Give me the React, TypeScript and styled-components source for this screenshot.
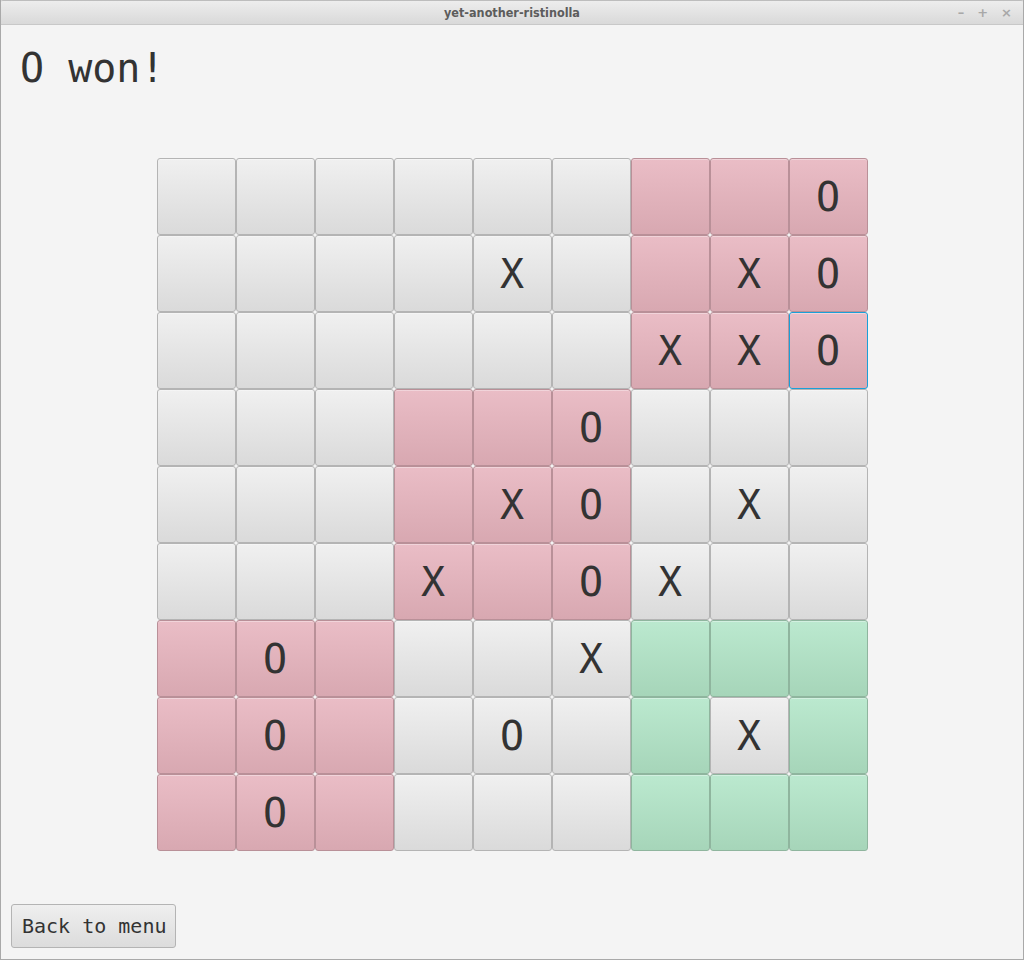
import { styled, createGlobalStyle } from 'styled-components';

const GlobalStyle = createGlobalStyle`
  html, body {
    margin: 0;
    padding: 0;
    background: #f4f4f4;
  }
`;

const Window = styled.div`
  display: flex;
  flex-flow: column nowrap;
  width: 1024px;
  height: 960px;
  box-sizing: border-box;
  border: 1px solid #a9a9a9;
  border-top: none;
  background: #f4f4f4;
  overflow: hidden;
`;

const TitleBar = styled.div`
  position: relative;
  flex: 0 0 25px;
  display: flex;
  align-items: center;
  justify-content: center;
  margin: 0 -1px;
  box-sizing: border-box;
  background: linear-gradient(#ededed, #d9d9d9);
  border-bottom: 1px solid #c8c8c8;
  border-top: 1px solid #bdbdbd;
  border-radius: 3px 3px 0 0;
  font-family: 'DejaVu Sans Condensed', 'DejaVu Sans', sans-serif;
  font-weight: bold;
  font-size: 12.5px;
  color: #5c5c5c;
`;

const WindowControls = styled.div`
  position: absolute;
  right: 12px;
  top: 0;
  height: 100%;
  display: flex;
  align-items: center;
  gap: 13px;
  font-family: 'DejaVu Sans', sans-serif;
  font-size: 13px;
  font-weight: bold;
  color: #a8a8a8;
`;

const Content = styled.div`
  flex: 1;
  display: flex;
  flex-flow: column nowrap;
  padding: 20px 10px 11px 19px;
  font-family: 'DejaVu Sans Mono', 'Liberation Mono', monospace;
  color: #333333;
`;

const Heading = styled.div`
  font-size: 40px;
  line-height: 47px;
`;

const BoardArea = styled.div`
  display: flex;
  justify-content: center;
  margin: 66px 0 0 -9px;
`;

const Board = styled.div`
  display: grid;
  grid-template-columns: repeat(9, 79px);
  grid-auto-rows: 77px;
`;

type Tone = 'plain' | 'lost' | 'won';

const tones: Record<Tone, { top: string; bottom: string; border: string }> = {
  plain: { top: '#f0f0f0', bottom: '#dadada', border: '#b4b4b4' },
  lost: { top: '#eabdc6', bottom: '#d8a8b1', border: '#b99098' },
  won: { top: '#bbe9cf', bottom: '#a6d5b9', border: '#8fb59e' },
};

const Cell = styled.div<{ $tone: Tone; $focused?: boolean }>`
  box-sizing: border-box;
  display: flex;
  align-items: center;
  justify-content: center;
  border: 1px solid
    ${({ $tone, $focused }) => ($focused ? '#1a9fd8' : tones[$tone].border)};
  border-radius: 3px;
  background: linear-gradient(
    ${({ $tone }) => tones[$tone].top},
    ${({ $tone }) => tones[$tone].bottom}
  );
  box-shadow: inset 0 1px 0 rgba(255, 255, 255, 0.35);
  font-size: 40px;
  line-height: 1;
  color: #333333;
`;

const Spacer = styled.div`
  flex: 1;
`;

const MenuButton = styled.button`
  align-self: flex-start;
  box-sizing: border-box;
  width: 165px;
  height: 44px;
  margin-left: -9px;
  padding: 0 0 0 10px;
  border: 1px solid #b4b4b4;
  border-radius: 3px;
  background: linear-gradient(#efefef, #dcdcdc);
  font-family: 'DejaVu Sans Mono', 'Liberation Mono', monospace;
  font-size: 20px;
  color: #333333;
  text-align: left;
  white-space: nowrap;
`;

const marks = [
  '........O',
  '....X..XO',
  '......XXO',
  '.....O...',
  '....XO.X.',
  '...X.OX..',
  '.O...X...',
  '.O..O..X.',
  '.O.......',
];

const colors = [
  '......ppp',
  '......ppp',
  '......ppp',
  '...ppp...',
  '...ppp...',
  '...ppp...',
  'ppp...ggg',
  'ppp...g.g',
  'ppp...ggg',
];

const toneOf = (c: string): Tone => (c === 'p' ? 'lost' : c === 'g' ? 'won' : 'plain');

export default function App() {
  return (
    <>
      <GlobalStyle />
      <Window>
        <TitleBar>
          yet-another-ristinolla
          <WindowControls>
            <span>–</span>
            <span>+</span>
            <span>×</span>
          </WindowControls>
        </TitleBar>
        <Content>
          <Heading>O won!</Heading>
          <BoardArea>
            <Board>
              {marks.map((row, r) =>
                row.split('').map((m, c) => (
                  <Cell
                    key={`${r}-${c}`}
                    $tone={toneOf(colors[r][c])}
                    $focused={r === 2 && c === 8}
                  >
                    {m === '.' ? '' : m}
                  </Cell>
                ))
              )}
            </Board>
          </BoardArea>
          <Spacer />
          <MenuButton>Back to menu</MenuButton>
        </Content>
      </Window>
    </>
  );
}
